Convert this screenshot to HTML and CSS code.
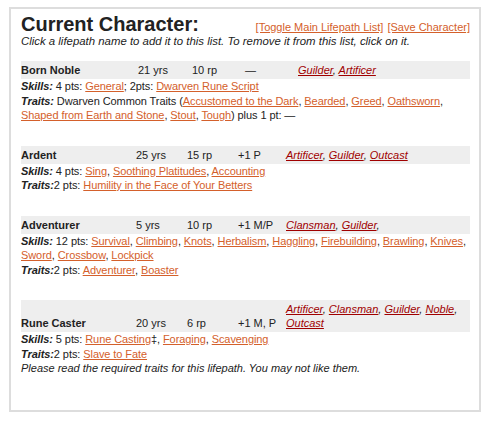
FILE: index.html
```html
<!DOCTYPE html>
<html lang="en">
<head>
    <meta charset="UTF-8">
    <title>Current Character</title>
    <link rel="stylesheet" href="styles.css">
</head>
<body>
    <div class="sheet">
        <div class="sheet-head">
            <h2>Current Character:</h2>
            <div class="tools">
                <a href="#">[Toggle Main Lifepath List]</a>
                <a href="#">[Save Character]</a>
            </div>
        </div>
        <p class="hint">Click a lifepath name to add it to this list. To remove it from this list, click on it.</p>

        <div class="lifepath">
            <div class="lp-head lp-first">
                <span class="lp-name">Born Noble</span>
                <span>21 yrs</span>
                <span>10 rp</span>
                <span>&mdash;</span>
                <span class="leads"><a href="#">Guilder</a>, <a href="#">Artificer</a></span>
            </div>
            <div class="lp-line"><b>Skills:</b> 4 pts: <a href="#">General</a>; 2pts: <a href="#">Dwarven Rune Script</a></div>
            <div class="lp-line"><b>Traits:</b> Dwarven Common Traits (<a href="#">Accustomed to the Dark</a>, <a href="#">Bearded</a>, <a href="#">Greed</a>, <a href="#">Oathsworn</a>, <a href="#">Shaped from Earth and Stone</a>, <a href="#">Stout</a>, <a href="#">Tough</a>) plus 1 pt: &mdash;</div>
        </div>

        <div class="lifepath">
            <div class="lp-head">
                <span class="lp-name">Ardent</span>
                <span>25 yrs</span>
                <span>15 rp</span>
                <span>+1 P</span>
                <span class="leads"><a href="#">Artificer</a>, <a href="#">Guilder</a>, <a href="#">Outcast</a></span>
            </div>
            <div class="lp-line"><b>Skills:</b> 4 pts: <a href="#">Sing</a>, <a href="#">Soothing Platitudes</a>, <a href="#">Accounting</a></div>
            <div class="lp-line"><b>Traits:</b>2 pts: <a href="#">Humility in the Face of Your Betters</a></div>
        </div>

        <div class="lifepath">
            <div class="lp-head">
                <span class="lp-name">Adventurer</span>
                <span>5 yrs</span>
                <span>10 rp</span>
                <span>+1 M/P</span>
                <span class="leads"><a href="#">Clansman</a>, <a href="#">Guilder</a>,</span>
            </div>
            <div class="lp-line"><b>Skills:</b> 12 pts: <a href="#">Survival</a>, <a href="#">Climbing</a>, <a href="#">Knots</a>, <a href="#">Herbalism</a>, <a href="#">Haggling</a>, <a href="#">Firebuilding</a>, <a href="#">Brawling</a>, <a href="#">Knives</a>, <a href="#">Sword</a>, <a href="#">Crossbow</a>, <a href="#">Lockpick</a></div>
            <div class="lp-line"><b>Traits:</b>2 pts: <a href="#">Adventurer</a>, <a href="#">Boaster</a></div>
        </div>

        <div class="lifepath">
            <div class="lp-head">
                <span class="lp-name">Rune Caster</span>
                <span>20 yrs</span>
                <span>6 rp</span>
                <span>+1 M, P</span>
                <span class="leads"><a href="#">Artificer</a>, <a href="#">Clansman</a>, <a href="#">Guilder</a>, <a href="#">Noble</a>, <a href="#">Outcast</a></span>
            </div>
            <div class="lp-line"><b>Skills:</b> 5 pts: <a href="#">Rune Casting</a>&Dagger;, <a href="#">Foraging</a>, <a href="#">Scavenging</a></div>
            <div class="lp-line"><b>Traits:</b>2 pts: <a href="#">Slave to Fate</a></div>
            <div class="lp-note">Please read the required traits for this lifepath. You may not like them.</div>
        </div>
    </div>
</body>
</html>
```

FILE: styles.css
```css
body {
    font-family: "Liberation Sans", Arial, sans-serif;
    font-size: 11px;
    color: #222;
    background-color: #fff;
    margin: 7px 8px 0 9px;
}

a {
    color: #d4602b;
}

.sheet {
    border: 2px solid #ddd;
    padding: 4px 9px 0 10px;
    height: 405px;
    box-sizing: border-box;
}

.sheet-head {
    display: flex;
    justify-content: space-between;
    align-items: baseline;
}

h2 {
    font-size: 20px;
    margin: 0;
    color: #222;
}

.tools a {
    margin-left: 1px;
}

.hint {
    font-style: italic;
    font-size: 11.4px;
    line-height: 13px;
    margin: -1px 0 13px 0;
}

.lifepath {
    margin-bottom: 23px;
}

.lp-head {
    display: grid;
    grid-template-columns: 115px 51px 51px 48px 1fr;
    align-items: end;
    background-color: #eee;
    padding: 2px 0;
    line-height: 14px;
}

    .lp-head.lp-first {
        grid-template-columns: 117px 54px 53px 53px 1fr;
    }

.lp-name {
    font-weight: bold;
}

.leads {
    font-style: italic;
}

    .leads a {
        color: #a00000;
    }

.lp-line {
    line-height: 14.5px;
    letter-spacing: -0.08px;
}

    .lp-line b {
        font-style: italic;
    }

.lp-note {
    font-style: italic;
    line-height: 14.5px;
}
```
